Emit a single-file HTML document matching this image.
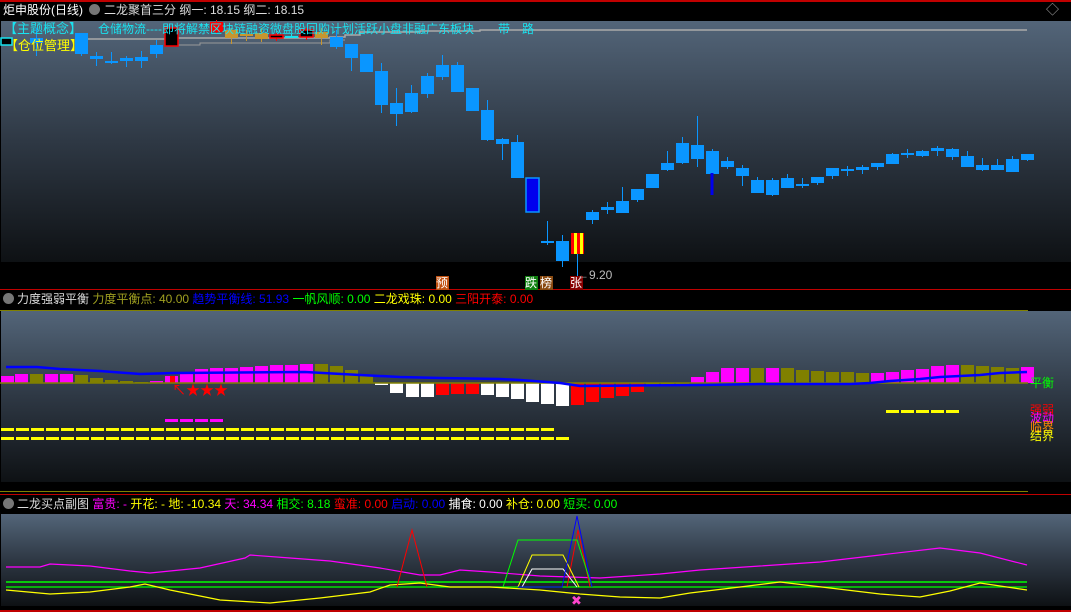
<!DOCTYPE html>
<html><head><meta charset="utf-8"><style>
body{margin:0;width:1071px;height:612px;background:#000;position:relative;overflow:hidden;font-family:"Liberation Sans","Noto Sans CJK SC",sans-serif;font-size:12px}
.t{position:absolute;white-space:nowrap;line-height:14px}
svg{position:absolute;left:0;top:0}
</style></head><body>
<svg width="1071" height="612" id="s">
<defs>
<linearGradient id="g" x1="0" y1="0" x2="0" y2="1"><stop offset="0" stop-color="#536579"/><stop offset="0.5" stop-color="#2e3844"/><stop offset="1" stop-color="#0e1114"/></linearGradient>
</defs>
<rect x="0" y="0" width="1071" height="2" fill="#c00000"/>
<rect x="1" y="21" width="1070" height="241" fill="url(#g)"/>
<rect x="0" y="289" width="1071" height="1" fill="#c00000"/>
<rect x="0" y="310" width="1028" height="1" fill="#808000"/>
<rect x="1" y="311" width="1070" height="171" fill="url(#g)"/>
<rect x="0" y="491" width="1028" height="1" fill="#808000"/>
<rect x="0" y="494" width="1071" height="1" fill="#c00000"/>
<rect x="1" y="514" width="1070" height="92" fill="url(#g)"/>
<rect x="0" y="610" width="1071" height="2" fill="#c00000"/>
<g id="c"></g>
</svg>
<div class="t" style="left:3px;top:3px;color:#fff;font-size:12px">炬申股份(日线)</div>
<div class="t" style="left:89px;top:4px;width:11px;height:11px;border-radius:6px;background:#777"></div>
<div class="t" style="left:104px;top:3px;color:#ddd;font-size:12px">二龙聚首三分 纲一: 18.15 纲二: 18.15</div>
<div class="t" style="left:1046px;top:3px;color:#aaa;font-size:13px">◇</div>
<div class="t" style="left:4px;top:22px;color:#19e3f0;font-size:13px">【主题概念】</div>
<div class="t" style="left:98px;top:22px;color:#19e3f0;font-size:12px;letter-spacing:0px">仓储物流----即将解禁区块链融资微盘股回购计划活跃小盘非融广东板块　　带　路</div>
<div class="t" style="left:5px;top:39px;color:#ff0;font-size:13px">【仓位管理】</div>
<div class="t" style="left:436px;top:276px;width:13px;background:#c05010;color:#fff">预</div>
<div class="t" style="left:525px;top:276px;width:13px;background:#108010;color:#fff">跌</div>
<div class="t" style="left:540px;top:276px;width:13px;background:#8a4a10;color:#fff">榜</div>
<div class="t" style="left:570px;top:276px;width:13px;background:#800;color:#fff">张</div>
<div class="t" style="left:577px;top:268px;color:#bbb">←9.20</div>
<div class="t" style="left:3px;top:293px;width:11px;height:11px;border-radius:6px;background:#777"></div>
<div class="t" style="left:17px;top:292px"><span style="color:#ddd">力度强弱平衡 </span><span style="color:#a0a020">力度平衡点: 40.00 </span><span style="color:#0000ff">趋势平衡线: 51.93 </span><span style="color:#0f0">一帆风顺: 0.00 </span><span style="color:#ff0">二龙戏珠: 0.00 </span><span style="color:#f00">三阳开泰: 0.00</span></div>
<div class="t" style="left:172px;top:383px;color:#f00;font-size:14px">↖★★★</div>
<div class="t" style="left:1030px;top:376px;color:#0f0">平衡</div>
<div class="t" style="left:1030px;top:403px;color:#f00">强弱</div>
<div class="t" style="left:1030px;top:411px;color:#f0f">波动</div>
<div class="t" style="left:1030px;top:420px;color:#f80">临界</div>
<div class="t" style="left:1030px;top:429px;color:#ff0">结界</div>
<div class="t" style="left:3px;top:498px;width:11px;height:11px;border-radius:6px;background:#777"></div>
<div class="t" style="left:17px;top:497px"><span style="color:#ddd">二龙买点副图 </span><span style="color:#f0f">富贵: - </span><span style="color:#ff0">开花: - </span><span style="color:#ff0">地: -10.34 </span><span style="color:#f0f">天: 34.34 </span><span style="color:#0f0">相交: 8.18 </span><span style="color:#f00">蛮准: 0.00 </span><span style="color:#00f">启动: 0.00 </span><span style="color:#fff">捕食: 0.00 </span><span style="color:#ff0">补仓: 0.00 </span><span style="color:#0f0">短买: 0.00</span></div>
<div class="t" style="left:571px;top:594px;color:#f4c;font-size:13px">✖</div>
<script>
var S='',B='#0a96ff';
function r(x,y,w,h,f,st){S+='<rect x="'+x+'" y="'+y+'" width="'+w+'" height="'+h+'" fill="'+f+'"'+(st?' stroke="'+st+'" stroke-width="1.5"':'')+'/>';}
function l(x1,y1,x2,y2,c,w){S+='<line x1="'+x1+'" y1="'+y1+'" x2="'+x2+'" y2="'+y2+'" stroke="'+c+'" stroke-width="'+(w||1)+'"/>';}
function pl(p,c,w){S+='<polyline points="'+p+'" fill="none" stroke="'+c+'" stroke-width="'+(w||1)+'"/>';}
pl('88,39 170,39 170,38 330,38 330,37 345,37 345,35 360,35 360,32 420,32 420,31 480,31 480,30 1027,30','#aaa',1.5);
pl('170,45 200,45 200,43 330,43 330,40 345,40','#999',1);
var C=[[30,38,43,28,56],[75,33,54,33,56],[90,56,59,52,66],[105,61,63,52,64],[120,58,61,56,67],[135,57,61,51,68],[150,45,54,40,58],[165,28,46,28,46,'#000','#f00'],[210,22,32,20,34,'#f00'],[225,30,38,28,44,'#c8962e'],[240,34,36,30,41,'#c8962e'],[255,33,39,28,42,'#c8962e'],[270,35,38,33,41,'#000','#f00'],[285,36,37,34,38,'#19e3f0'],[300,30,37,28,40,'#000','#f00'],[315,32,38,28,45,'#c8962e'],[330,37,47,30,49],[345,44,58,44,71],[360,54,72,54,72],[375,71,105,63,113],[390,103,114,88,126],[405,93,112,85,113],[421,76,94,73,98],[436,65,77,55,80],[451,65,92,62,92],[466,88,111,88,111],[481,110,140,100,141],[496,139,144,138,160],[511,142,178,135,178],[526,178,212,178,212,'#0000ee','#0a96ff'],[541,241,243,221,245],[556,241,261,235,267],[586,212,220,210,224],[601,207,210,202,214],[616,201,213,187,213],[631,189,200,189,202],[646,174,188,174,188],[661,163,170,151,171],[676,143,163,137,164],[691,145,159,116,167],[706,151,174,149,174],[721,161,167,157,169],[736,168,176,165,186],[751,180,193,177,193],[766,180,195,178,196],[781,178,188,174,188],[796,184,185,178,188],[811,177,183,177,185],[826,168,176,168,179],[841,169,170,166,176],[856,167,170,165,174],[871,163,167,163,170],[886,154,164,153,164],[901,153,155,149,158],[916,151,156,150,157],[931,148,151,146,156],[946,149,157,148,160],[961,156,167,151,167],[976,165,170,158,171],[991,165,170,159,170],[1006,159,172,156,172],[1021,154,160,154,161]];
C.forEach(function(c){var f=c[5]||B;l(c[0]+6.5,c[3],c[0]+6.5,c[4],c[6]&&f=='#000'?'#f00':(f=='#0000ee'?B:f));r(c[0],c[1],13,Math.max(c[2]-c[1],2),f,c[6]);});
l(712,173,712,195,'#0000ee',3);
r(1,38,11,7,'#000','#19e3f0');
l(577.5,233,577.5,277,B);r(571,233,13,21,'#f00');r(574,233,3,21,'#ff0');r(580,233,3,21,'#ff0');
var P=[[1,376,'m'],[15,374,'m'],[30,374,'o'],[45,374,'m'],[60,374,'m'],[75,375,'o'],[90,378,'o'],[105,380,'o'],[120,381,'o'],[135,382,'o'],[150,381,'m'],[165,376,'m'],[180,373,'m'],[195,369,'m'],[210,368,'m'],[225,368,'m'],[240,367,'m'],[255,366,'m'],[270,365,'m'],[285,365,'m'],[300,364,'m'],[315,364,'o'],[330,366,'o'],[345,370,'o'],[360,376,'o'],[375,385,'w'],[390,393,'w'],[406,397,'w'],[421,397,'w'],[436,395,'r'],[451,394,'r'],[466,394,'r'],[481,395,'w'],[496,397,'w'],[511,399,'w'],[526,402,'w'],[541,404,'w'],[556,406,'w'],[571,405,'r'],[586,402,'r'],[601,398,'r'],[616,396,'r'],[631,392,'r'],[646,386,'o'],[661,385,'o'],[676,384,'o'],[691,377,'m'],[706,372,'m'],[721,368,'m'],[736,368,'m'],[751,368,'o'],[766,368,'m'],[781,368,'o'],[796,370,'o'],[811,371,'o'],[826,372,'o'],[841,372,'o'],[856,373,'o'],[871,373,'m'],[886,372,'m'],[901,370,'m'],[916,369,'m'],[931,366,'m'],[946,365,'m'],[961,365,'o'],[976,366,'o'],[991,367,'o'],[1006,368,'o'],[1021,367,'m']];
var col={m:'#ff00ff',o:'#808000',w:'#fff',r:'#f00'};
P.forEach(function(p){var y=p[1];if(y<383)r(p[0],y,13,383-y,col[p[2]]);else r(p[0],383,13,y-383,col[p[2]]);});
r(170,376,5,7,'#f00');
l(0,383,1028,383,'#808000',1.5);
pl('6,367 37,367 60,369 100,371 140,374 175,373 305,372 360,375 400,377 440,378 500,379 520,380 560,383 580,386 700,385 760,384 850,384 870,383 890,381 920,379 940,377 980,375 1000,373 1027,372','#00f',2.5);
for(var x=1;x<553;x+=15)r(x,428,13,3,'#ff0');
for(var x=1;x<568;x+=15)r(x,437,13,3,'#ff0');
for(var x=165;x<223;x+=15)r(x,419,13,3,'#f0f');
for(var x=886;x<959;x+=15)r(x,410,13,3,'#ff0');
l(6,582,1027,582,'#0f0',1.5);l(6,587,1027,587,'#0f0',1.2);
pl('6,567 40,567 50,564 90,566 130,571 150,573 200,568 245,558 250,555 290,558 330,561 380,568 420,575 440,575 460,570 490,572 540,576 600,578 660,574 700,570 760,566 820,562 880,555 940,548 980,553 1027,565','#f0f',1.2);
pl('6,590 50,594 90,592 130,587 145,584 170,590 220,600 270,603 320,598 370,592 390,585 420,583 450,587 490,587 540,590 580,594 620,597 660,598 690,593 740,587 780,582 830,588 880,594 920,597 950,591 980,583 1027,590','#ff0',1.2);
pl('397,587 412,530 427,587','#f00');
pl('567,587 578,530 590,587','#f00');
pl('503,587 518,540 577,540 592,587','#0f0');
pl('518,587 532,555 563,555 579,587','#ff0');
pl('522,587 532,569 563,569 577,587','#fff');
pl('518,587 562,587 577,516 592,587','#00f');
document.getElementById('c').innerHTML=S;
</script>
</body></html>
